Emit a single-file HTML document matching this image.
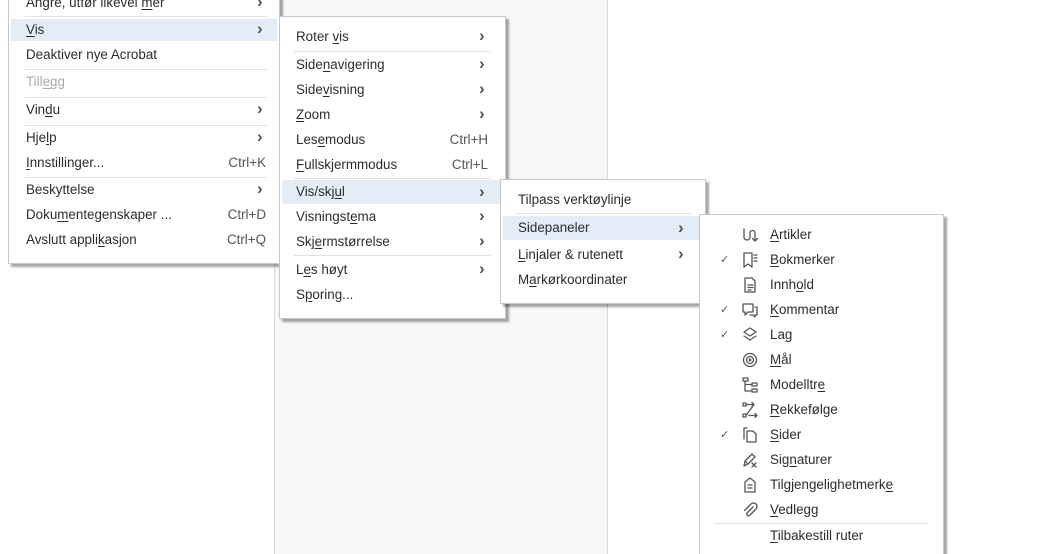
<!DOCTYPE html>
<html><head><meta charset="utf-8"><style>
*{margin:0;padding:0;box-sizing:border-box}
html,body{width:1062px;height:554px;overflow:hidden}
body{background:#fff;position:relative;font-family:"Liberation Sans",sans-serif;font-size:13.4px;color:#2c2c2c}
.panel{position:absolute;left:274px;top:0;width:334px;height:554px;background:#f7f7f7;border-left:1px solid #d8d8d8;border-right:1px solid #d8d8d8}
.m{position:absolute;background:#fff;border:1px solid #c8c8c8;box-shadow:3px 3px 2px rgba(0,0,0,.35)}
.i{position:absolute;left:0;right:0;height:22px;line-height:22px;white-space:nowrap}
.hl{background:#e3edf8}
.t{position:absolute}
.a{position:absolute;font-size:17px;font-weight:bold;color:#555;top:-1px}
.k{position:absolute;color:#555}
.s{position:absolute;height:1px;background:#e2e2e2}
.dis{color:#aaa}
u{text-decoration:underline;text-underline-offset:2px}
svg{position:absolute;width:18px;height:18px;fill:none;stroke:#555;stroke-width:1.3;stroke-linecap:round;stroke-linejoin:round}
.c{position:absolute;left:20px;font-size:11px;color:#555}
</style></head><body>
<div class="panel"></div>

<div class="m" style="left:8px;top:-12px;width:272px;height:276px">
 <div class="i" style="top:3px"><span class="t" style="left:17px">Angre, utfør likevel <u>m</u>er</span><span class="a" style="left:248px">›</span></div>
 <div class="s" style="left:16px;right:12px;top:27px"></div>
 <div class="i hl" style="top:30px;left:2px;right:2px"><span class="t" style="left:15px"><u>V</u>is</span><span class="a" style="left:246px">›</span></div>
 <div class="i" style="top:55px"><span class="t" style="left:17px">Deaktiver nye Acrobat</span></div>
 <div class="s" style="left:16px;right:12px;top:80px"></div>
 <div class="i dis" style="top:82px"><span class="t" style="left:17px">Till<u>egg</u></span></div>
 <div class="s" style="left:16px;right:12px;top:108px"></div>
 <div class="i" style="top:110px"><span class="t" style="left:17px">Vin<u>d</u>u</span><span class="a" style="left:248px">›</span></div>
 <div class="s" style="left:16px;right:12px;top:136px"></div>
 <div class="i" style="top:138px"><span class="t" style="left:17px">Hje<u>l</u>p</span><span class="a" style="left:248px">›</span></div>
 <div class="i" style="top:163px"><span class="t" style="left:17px"><u>I</u>nnstillinger...</span><span class="k" style="right:13px">Ctrl+K</span></div>
 <div class="s" style="left:16px;right:12px;top:188px"></div>
 <div class="i" style="top:190px"><span class="t" style="left:17px">Beskyttelse</span><span class="a" style="left:248px">›</span></div>
 <div class="i" style="top:215px"><span class="t" style="left:17px">Doku<u>m</u>entegenskaper ...</span><span class="k" style="right:13px">Ctrl+D</span></div>
 <div class="i" style="top:240px"><span class="t" style="left:17px">Avslutt appli<u>k</u>asjon</span><span class="k" style="right:13px">Ctrl+Q</span></div>
</div>

<div class="m" style="left:279px;top:16px;width:227px;height:303px">
 <div class="i" style="top:9px"><span class="t" style="left:16px">Roter <u>v</u>is</span><span class="a" style="left:199px">›</span></div>
 <div class="s" style="left:14px;right:14px;top:34px"></div>
 <div class="i" style="top:37px"><span class="t" style="left:16px">Side<u>n</u>avigering</span><span class="a" style="left:199px">›</span></div>
 <div class="i" style="top:62px"><span class="t" style="left:16px">Side<u>v</u>isning</span><span class="a" style="left:199px">›</span></div>
 <div class="i" style="top:87px"><span class="t" style="left:16px"><u>Z</u>oom</span><span class="a" style="left:199px">›</span></div>
 <div class="i" style="top:112px"><span class="t" style="left:16px">Les<u>e</u>modus</span><span class="k" style="right:17px">Ctrl+H</span></div>
 <div class="i" style="top:137px"><span class="t" style="left:16px"><u>F</u>ullskjermmodus</span><span class="k" style="right:17px">Ctrl+L</span></div>
 <div class="s" style="left:14px;right:14px;top:161px"></div>
 <div class="i hl" style="top:163px;left:2px;right:2px;height:24px;line-height:24px"><span class="t" style="left:14px">Vis/skj<u>u</u>l</span><span class="a" style="left:197px;top:0">›</span></div>
 <div class="i" style="top:189px"><span class="t" style="left:16px">Visningst<u>e</u>ma</span><span class="a" style="left:199px">›</span></div>
 <div class="i" style="top:214px"><span class="t" style="left:16px">Skj<u>e</u>rmstørrelse</span><span class="a" style="left:199px">›</span></div>
 <div class="s" style="left:14px;right:14px;top:238px"></div>
 <div class="i" style="top:242px"><span class="t" style="left:16px">L<u>e</u>s høyt</span><span class="a" style="left:199px">›</span></div>
 <div class="i" style="top:267px"><span class="t" style="left:16px">S<u>p</u>oring...</span></div>
</div>

<div class="m" style="left:500px;top:179px;width:206px;height:125px">
 <div class="i" style="top:9px"><span class="t" style="left:17px">Tilpass verktøylinje</span></div>
 <div class="s" style="left:14px;right:14px;top:33px"></div>
 <div class="i hl" style="top:36px;left:2px;right:0;height:24px;line-height:24px"><span class="t" style="left:15px">Sidepaneler</span><span class="a" style="left:175px;top:0">›</span></div>
 <div class="i" style="top:64px"><span class="t" style="left:17px"><u>L</u>injaler &amp; rutenett</span><span class="a" style="left:177px">›</span></div>
 <div class="i" style="top:89px"><span class="t" style="left:17px">M<u>a</u>rkørkoordinater</span></div>
</div>

<div class="m" style="left:699px;top:214px;width:245px;height:345px">
 <div class="i" style="top:9px"><svg style="left:41px;top:2px" viewBox="0 0 18 18"><path d="M3 3v8a3 3 0 0 0 6 0V7a2.5 2.5 0 0 1 5 0v8M11.5 12.5l2.5 2.5 2.5-2.5"/></svg><span class="t" style="left:70px"><u>A</u>rtikler</span></div>
 <div class="i" style="top:34px"><span class="c">✓</span><svg style="left:41px;top:2px" viewBox="0 0 18 18"><path d="M3 2h8v14l-4-3-4 3z M13 4h3M13 7h3M13 10h3"/></svg><span class="t" style="left:70px"><u>B</u>okmerker</span></div>
 <div class="i" style="top:59px"><svg style="left:41px;top:2px" viewBox="0 0 18 18"><path d="M4 2h7l3 3v11H4z M7 9h5M7 11.5h5M7 14h3"/></svg><span class="t" style="left:70px">Innh<u>o</u>ld</span></div>
 <div class="i" style="top:84px"><span class="c">✓</span><svg style="left:41px;top:2px" viewBox="0 0 18 18"><path d="M2 3h10v8H7l-3 3v-3H2z M14 6h2v8h-2v2l-2-2H9"/></svg><span class="t" style="left:70px"><u>K</u>ommentar</span></div>
 <div class="i" style="top:109px"><span class="c">✓</span><svg style="left:41px;top:2px" viewBox="0 0 18 18"><path d="M9 2l6 4-6 4-6-4z M3 10l6 4 6-4"/></svg><span class="t" style="left:70px">La<u>g</u></span></div>
 <div class="i" style="top:134px"><svg style="left:41px;top:2px" viewBox="0 0 18 18"><circle cx="9" cy="9" r="6.5"/><circle cx="9" cy="9" r="3.5"/><circle cx="9" cy="9" r=".8"/></svg><span class="t" style="left:70px"><u>M</u>ål</span></div>
 <div class="i" style="top:159px"><svg style="left:41px;top:2px" viewBox="0 0 18 18"><path d="M2 2h5v3H2z M11 7h5v3h-5z M11 13h5v3h-5z M4 5v10h7 M4 8.5h7"/></svg><span class="t" style="left:70px">Modelltr<u>e</u></span></div>
 <div class="i" style="top:184px"><svg style="left:41px;top:2px" viewBox="0 0 18 18"><path d="M2 2h3v3H2z M2 13h3v3H2z M5 3.5h8l-8 11 M11 1.5l2 2-2 2 M8 14.5h8 M14 12.5l2 2-2 2"/></svg><span class="t" style="left:70px"><u>R</u>ekkefølge</span></div>
 <div class="i" style="top:209px"><span class="c">✓</span><svg style="left:41px;top:2px" viewBox="0 0 18 18"><path d="M6 2H3v11 M6 5h6l3 3v8H6z"/></svg><span class="t" style="left:70px"><u>S</u>ider</span></div>
 <div class="i" style="top:234px"><svg style="left:41px;top:2px" viewBox="0 0 18 18"><path d="M3 15l1-5 7-7 3 3-7 7z M6 12l-2-2 M11 12l4 4M15 12l-4 4"/></svg><span class="t" style="left:70px">Sig<u>n</u>aturer</span></div>
 <div class="i" style="top:259px"><svg style="left:41px;top:2px" viewBox="0 0 18 18"><path d="M4 6l5-4 5 4v10H4z M7 9h4M7 12h4"/></svg><span class="t" style="left:70px">Tilgjengelighetmerk<u>e</u></span></div>
 <div class="i" style="top:284px"><svg style="left:41px;top:2px" viewBox="0 0 18 18"><path d="M12 6l-6 6a1.8 1.8 0 0 0 2.5 2.5l6.5-6.5a3.5 3.5 0 0 0-5-5L3.5 9.5"/></svg><span class="t" style="left:70px"><u>V</u>edlegg</span></div>
 <div class="s" style="left:14px;right:14px;top:308px"></div>
 <div class="i" style="top:310px"><span class="t" style="left:70px"><u>T</u>ilbakestill ruter</span></div>
</div>
</body></html>
